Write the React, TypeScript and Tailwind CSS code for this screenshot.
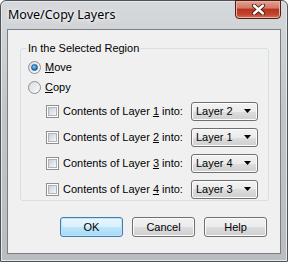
const rows = [
  { n: "1", v: "Layer 2" },
  { n: "2", v: "Layer 1" },
  { n: "3", v: "Layer 4" },
  { n: "4", v: "Layer 3" },
]

const Radio = ({ checked }: { checked?: boolean }) => (
  <div className="w-[13px] h-[13px] rounded-full border border-[#8c8f93] bg-gradient-to-br from-[#d9dbde] to-[#fbfbfb] flex items-center justify-center shrink-0">
    {checked && (
      <div className="w-[7px] h-[7px] rounded-full bg-[radial-gradient(circle_at_40%_35%,#8fd3f6_0%,#2a7fc2_55%,#0d4f8f_100%)] border border-[#1f5f99]" />
    )}
  </div>
)

const Check = () => (
  <div className="w-[13px] h-[13px] border border-[#8e8f8f] bg-white p-[1px] shrink-0">
    <div className="w-full h-full border border-[#b0b4ba] bg-gradient-to-br from-[#cbcfd5] to-[#f7f7f7]" />
  </div>
)

const Button = ({ label, isDefault }: { label: string; isDefault?: boolean }) => (
  <div
    className={
      "w-[63px] h-[20px] rounded-[3px] border flex items-center justify-center text-[11px] text-black " +
      (isDefault
        ? "border-[#3c7fb1] bg-[linear-gradient(#eaf6fd_0%,#d9f0fc_50%,#bee6fd_50%,#a7d9f5_100%)] shadow-[inset_0_0_0_1px_#bfe4f7]"
        : "border-[#707070] bg-[linear-gradient(#f2f2f2_0%,#ebebeb_50%,#dddddd_50%,#cfcfcf_100%)] shadow-[inset_0_0_0_1px_#fcfcfc]")
    }
  >
    {label}
  </div>
)

export default function App() {
  return (
    <div className="w-[288px] h-[262px] bg-white font-['Liberation_Sans',Arial,sans-serif]">
      <div className="w-[288px] h-[262px] rounded-t-[6px] border border-[#4f5358] bg-[linear-gradient(#d6d9dc,#c2c6ca_40%,#b9bdc1)] flex flex-col shadow-[inset_0_0_0_1px_#e6e8ea]">
        <div className="h-[28px] flex items-start justify-between pl-[7px] pr-[6px] shrink-0">
          <div className="mt-[5px] text-[12.5px] text-black font-['Noto_Sans',sans-serif] [text-shadow:0_0_6px_#fff,0_0_3px_#fff]">
            Move/Copy Layers
          </div>
          <div className="w-[46px] h-[19px] -mt-[1px] rounded-b-[4px] border border-[#4a1f1a] bg-[linear-gradient(#e2a293_0%,#d37a68_40%,#b9331f_50%,#c4452f_80%,#d9735a_100%)] shadow-[inset_0_0_0_1px_#eab1a3] flex items-center justify-center">
            <svg width="13" height="11" viewBox="0 0 13 11">
              <path d="M2 1.5L11 9.5M11 1.5L2 9.5" stroke="#3a1812" strokeWidth="4.2" strokeLinecap="round" />
              <path d="M2 1.5L11 9.5M11 1.5L2 9.5" stroke="#fff" strokeWidth="2.4" strokeLinecap="round" />
            </svg>
          </div>
        </div>
        <div className="mx-[6px] h-[225px] border border-[#7b7f84] bg-[#f0f0f0] flex flex-col">
          <fieldset className="ml-[12px] mr-[11px] mt-[11px] h-[160px] border border-[#d5dfe5] rounded-[3px] px-[7px] pt-[2px]">
            <legend className="-ml-[1px] px-[1px] text-[11px] leading-[14px] text-black">
              In the Selected Region
            </legend>
            <div className="h-[20px] flex items-center gap-[4px] text-[11px] text-black">
              <Radio checked />
              <span>
                <u>M</u>ove
              </span>
            </div>
            <div className="h-[20px] flex items-center gap-[4px] text-[11px] text-black">
              <Radio />
              <span>
                <u>C</u>opy
              </span>
            </div>
            <div className="mt-[1px] flex flex-col">
              {rows.map((r) => (
                <div key={r.n} className="h-[26px] flex items-center text-[11px] text-black">
                  <div className="ml-[18px]">
                    <Check />
                  </div>
                  <div className="w-[132px] pl-[4px] whitespace-nowrap">
                    Contents of Layer <u>{r.n}</u> into:
                  </div>
                  <div className="w-[67px] h-[19px] rounded-[3px] border border-[#707070] bg-[linear-gradient(#f2f2f2_0%,#ebebeb_50%,#dddddd_50%,#cfcfcf_100%)] shadow-[inset_0_0_0_1px_#fcfcfc] flex items-center justify-between pl-[4px] pr-[6px]">
                    <span>{r.v}</span>
                    <svg width="7" height="4" viewBox="0 0 7 4">
                      <path d="M0 0H7L3.5 4Z" fill="#000" />
                    </svg>
                  </div>
                </div>
              ))}
            </div>
          </fieldset>
          <div className="mt-[16px] flex justify-end gap-[9px] pr-[13px]">
            <Button label="OK" isDefault />
            <Button label="Cancel" />
            <Button label="Help" />
          </div>
        </div>
      </div>
    </div>
  )
}
